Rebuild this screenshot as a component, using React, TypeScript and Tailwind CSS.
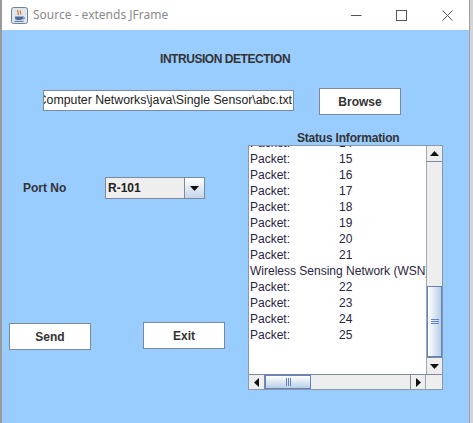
import React from "react";

const rows: [string, string][] = [
  ["Packet:", "14"],
  ["Packet:", "15"],
  ["Packet:", "16"],
  ["Packet:", "17"],
  ["Packet:", "18"],
  ["Packet:", "19"],
  ["Packet:", "20"],
  ["Packet:", "21"],
  ["Wireless Sensing Network (WSN) started", ""],
  ["Packet:", "22"],
  ["Packet:", "23"],
  ["Packet:", "24"],
  ["Packet:", "25"],
];

const JavaIcon = () => (
  <svg width="17" height="17" viewBox="0 0 17 17">
    <rect x="0.5" y="0.5" width="16" height="16" rx="2" fill="#dfe6ee" stroke="#6f8296" />
    <path d="M7 3 C5 5 9 6 7 8 M9.5 3.5 C8.5 5 10.5 6 9.5 7.5" stroke="#e0731c" strokeWidth="1.2" fill="none" />
    <path d="M4 9.5 H12 V11 C12 12.5 10.5 13 8 13 C5.5 13 4 12.5 4 11 Z" fill="#4b6c9a" />
    <path d="M12 10 C14 10 14 12 12 12" stroke="#4b6c9a" fill="none" />
    <path d="M3.5 14.3 H12.5" stroke="#4b6c9a" />
  </svg>
);

const TriUp = () => (
  <svg width="9" height="5" viewBox="0 0 9 5"><path d="M0 5 L4.5 0 L9 5 Z" fill="#111" /></svg>
);
const TriDown = () => (
  <svg width="9" height="5" viewBox="0 0 9 5"><path d="M0 0 L4.5 5 L9 0 Z" fill="#111" /></svg>
);
const TriLeft = () => (
  <svg width="5" height="9" viewBox="0 0 5 9"><path d="M5 0 L0 4.5 L5 9 Z" fill="#111" /></svg>
);
const TriRight = () => (
  <svg width="5" height="9" viewBox="0 0 5 9"><path d="M0 0 L5 4.5 L0 9 Z" fill="#111" /></svg>
);

const SwingButton = ({ label, className }: { label: string; className: string }) => (
  <div
    className={`flex items-center justify-center bg-white border border-[#7a8a99] text-[12px] font-bold text-[#333] ${className}`}
  >
    {label}
  </div>
);

export default function App() {
  return (
    <div className="w-[473px] h-[423px] flex overflow-hidden bg-[#dcdcdc] font-['Liberation_Sans',Arial,sans-serif]">
      <div className="w-[2px] bg-[#9a9a9a]" />
      <div className="w-[467px] flex flex-col">
        {/* title bar */}
        <div className="h-[30px] bg-white flex items-center font-['Noto_Sans',sans-serif]">
          <div className="ml-[9px] mt-[1px]">
            <JavaIcon />
          </div>
          <span className="ml-[5px] text-[12px] text-[#8a8a8a]">Source - extends JFrame</span>
          <div className="ml-auto flex items-center">
            <svg width="11" height="11" viewBox="0 0 11 11" className="mr-[34px]">
              <path d="M0 5.5 H10.5" stroke="#555" strokeWidth="1" />
            </svg>
            <svg width="11" height="11" viewBox="0 0 11 11" className="mr-[35px]">
              <rect x="0.5" y="0.5" width="10" height="10" fill="none" stroke="#555" />
            </svg>
            <svg width="11" height="11" viewBox="0 0 11 11" className="mr-[16px]">
              <path d="M0.5 0.5 L10.5 10.5 M10.5 0.5 L0.5 10.5" stroke="#555" />
            </svg>
          </div>
        </div>

        {/* body */}
        <div className="flex-1 bg-[#99ccff] text-[#333]">
          <div className="pt-[22px] ml-[158px] text-[12px] leading-[14px] font-bold tracking-[-0.45px]">
            INTRUSION DETECTION
          </div>

          <div className="flex items-start mt-[22px]">
            <div className="ml-[41px] mt-[2px] w-[251px] h-[21px] bg-white border border-[#7a8a99] flex items-center justify-end overflow-hidden whitespace-nowrap text-[12.3px] text-[#222] pr-[1px]">
              C:\Users\Desktop\Computer Networks\java\Single Sensor\abc.txt
            </div>
            <SwingButton label="Browse" className="ml-[25px] w-[82px] h-[27px]" />
          </div>

          <div className="flex items-start">
            {/* left column */}
            <div className="w-[246px] flex flex-col">
              <div className="flex items-center mt-[62px]">
                <span className="ml-[21px] w-[82px] text-[12px] font-bold">Port No</span>
                <div className="flex w-[100px] h-[22px]">
                  <div className="flex-1 bg-[#eeeeee] border border-[#7a8a99] flex items-center pl-[2px] text-[12px] font-bold text-[#222]">
                    R-101
                  </div>
                  <div className="w-[20px] border border-l-0 border-[#7a8a99] bg-gradient-to-b from-white to-[#c4d6ea] flex items-center justify-center">
                    <TriDown />
                  </div>
                </div>
              </div>
              <div className="flex items-start mt-[123px]">
                <SwingButton label="Send" className="ml-[7px] mt-[1px] w-[82px] h-[27px]" />
                <SwingButton label="Exit" className="ml-[52px] w-[82px] h-[27px]" />
              </div>
            </div>

            {/* right column */}
            <div className="flex flex-col">
              <div className="mt-[16px] ml-[49px] text-[12px] leading-[14px] font-bold tracking-[-0.2px]">
                Status Information
              </div>
              <div className="w-[195px] h-[245px] border border-[#8a99aa] bg-white flex flex-col">
                <div className="flex h-[228px]">
                  <div className="w-[177px] overflow-hidden text-[12px] leading-[16px] text-[#2a2540] pl-[1px]">
                    <div className="mt-[-11px]">
                      {rows.map(([a, b], i) => (
                        <div key={i} className="whitespace-nowrap">
                          {b ? (
                            <>
                              <span className="inline-block w-[89px]">{a}</span>
                              <span>{b}</span>
                            </>
                          ) : (
                            a
                          )}
                        </div>
                      ))}
                    </div>
                  </div>
                  {/* vertical scrollbar */}
                  <div className="w-[16px] flex flex-col bg-[#eeeeee] border-l border-[#9aa8b8]">
                    <div className="h-[16px] border-b border-[#7a8a99] flex items-center justify-center">
                      <TriUp />
                    </div>
                    <div className="h-[124px]" />
                    <div className="h-[71px] border border-[#6382bf] bg-gradient-to-r from-white to-[#b8cfe5] flex flex-col items-center justify-center gap-[1px]">
                      <div className="w-[8px] h-px bg-[#6382bf]" />
                      <div className="w-[8px] h-px bg-[#6382bf]" />
                      <div className="w-[8px] h-px bg-[#6382bf]" />
                    </div>
                    <div className="flex-1 border-t border-[#7a8a99] flex items-center justify-center">
                      <TriDown />
                    </div>
                  </div>
                </div>
                {/* horizontal scrollbar */}
                <div className="flex flex-1 bg-[#eeeeee] border-t border-[#7a8a99]">
                  <div className="w-[16px] border-r border-[#7a8a99] flex items-center justify-center">
                    <TriLeft />
                  </div>
                  <div className="w-[46px] border border-[#6382bf] bg-gradient-to-b from-white to-[#b8cfe5] flex items-center justify-center gap-[1px]">
                    <div className="w-px h-[8px] bg-[#6382bf]" />
                    <div className="w-px h-[8px] bg-[#6382bf]" />
                    <div className="w-px h-[8px] bg-[#6382bf]" />
                  </div>
                  <div className="flex-1" />
                  <div className="w-[15px] border-l border-[#7a8a99] flex items-center justify-center">
                    <TriRight />
                  </div>
                  <div className="w-[17px] border-l border-[#9aa8b8]" />
                </div>
              </div>
            </div>
          </div>
        </div>
      </div>
      <div className="w-[4px] bg-[#d4d4d4] border-l border-[#a0a0a0]" />
    </div>
  );
}
